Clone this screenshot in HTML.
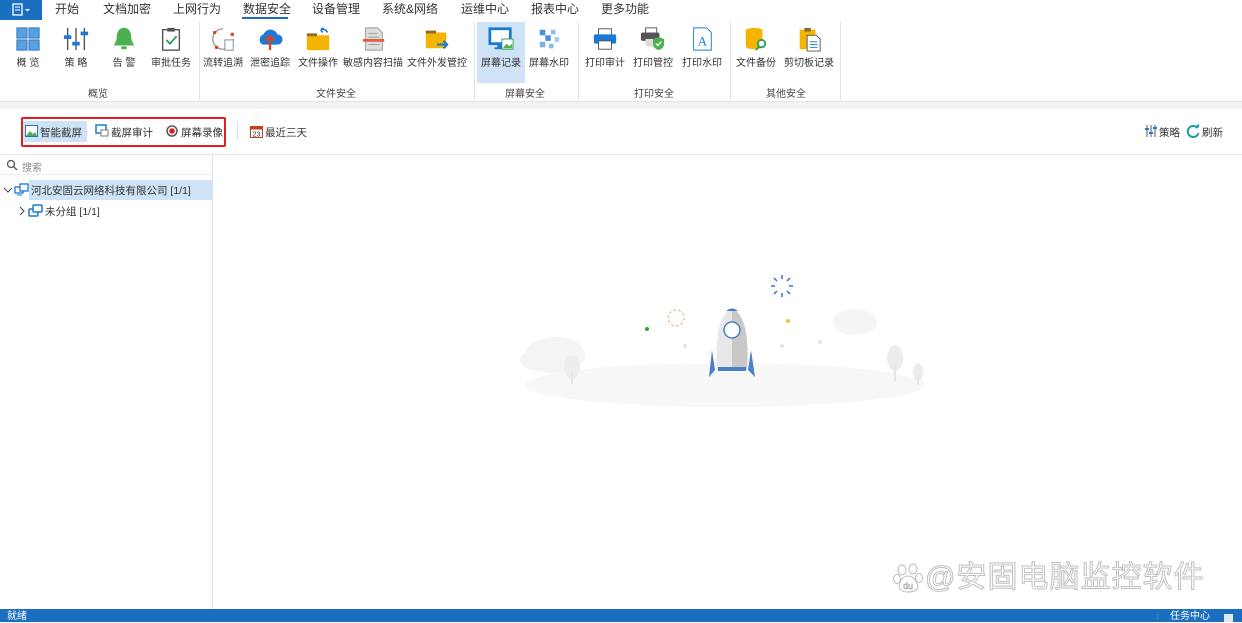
<!DOCTYPE html>
<html><head><meta charset="utf-8"><style>
*{margin:0;padding:0;box-sizing:border-box}
body{width:1242px;height:622px;overflow:hidden;background:#fff;font-family:"Liberation Sans","Noto Sans CJK SC",sans-serif;color:#333;position:relative}
.a{position:absolute}
.tab{position:absolute;top:1px;font-size:12px;color:#333;line-height:17px}
.it{position:absolute;top:22px;width:50px;text-align:center;font-size:10px;color:#333;line-height:13px}
.it svg{display:block;margin:4px auto 5px;width:26px;height:26px}
.gl{position:absolute;top:88px;font-size:10px;color:#444;text-align:center;line-height:14px}
.vd{position:absolute;top:22px;width:1px;height:78px;background:#e2e2e2}
</style></head><body>
<div class="a" style="left:0;top:0;width:42px;height:20px;background:#1a6fc0"></div>
<svg class="a" style="left:12px;top:3px" width="20" height="14"><rect x="1" y="1" width="9" height="11" fill="none" stroke="#fff" stroke-width="1.3"/><line x1="3" y1="4" x2="8" y2="4" stroke="#fff"/><line x1="3" y1="7" x2="8" y2="7" stroke="#fff"/><path d="M13 6 l2.5 2.5 l2.5 -2.5" fill="#fff"/></svg>
<div class="tab" style="left:55px">开始</div>
<div class="tab" style="left:103px">文档加密</div>
<div class="tab" style="left:173px">上网行为</div>
<div class="tab" style="left:243px">数据安全</div>
<div class="a" style="left:242px;top:17px;width:46px;height:2px;background:#1a6fc0"></div>
<div class="tab" style="left:312px">设备管理</div>
<div class="tab" style="left:382px">系统&amp;网络</div>
<div class="tab" style="left:461px">运维中心</div>
<div class="tab" style="left:531px">报表中心</div>
<div class="tab" style="left:601px">更多功能</div>
<div class="a" style="left:477px;top:22px;width:48px;height:61px;background:#cfe3f6"></div>
<div class="it" style="left:3px"><svg viewBox="0 0 28 28"><rect x="2" y="2" width="11" height="11" fill="#5aa0e0" stroke="#2a72c4"/><rect x="15" y="2" width="11" height="11" fill="#5aa0e0" stroke="#2a72c4"/><rect x="2" y="15" width="11" height="11" fill="#5aa0e0" stroke="#2a72c4"/><rect x="15" y="15" width="11" height="11" fill="#5aa0e0" stroke="#2a72c4"/></svg>概 览</div>
<div class="it" style="left:51px"><svg viewBox="0 0 28 28"><g stroke="#555" stroke-width="1.5"><line x1="5" y1="2" x2="5" y2="26"/><line x1="14" y1="2" x2="14" y2="26"/><line x1="23" y1="2" x2="23" y2="26"/></g><rect x="1" y="10" width="8" height="4" fill="#1a7ad4"/><rect x="10" y="17" width="8" height="4" fill="#1a7ad4"/><rect x="19" y="6" width="8" height="4" fill="#1a7ad4"/></svg>策 略</div>
<div class="it" style="left:99px"><svg viewBox="0 0 28 28"><path d="M14 2 C7 2 6 9 6 15 L3 21 H25 L22 15 C22 9 21 2 14 2Z" fill="#4caf50"/><rect x="11" y="22" width="6" height="3" rx="1" fill="#4caf50"/></svg>告 警</div>
<div class="it" style="left:146px"><svg viewBox="0 0 28 28"><rect x="5" y="4" width="18" height="22" fill="#fff" stroke="#555" stroke-width="1.5"/><rect x="10" y="2" width="8" height="4" fill="#555"/><path d="M9 15 l4 4 l7 -8" stroke="#2aa060" stroke-width="2" fill="none"/></svg>审批任务</div>
<div class="vd" style="left:199px"></div>
<div class="it" style="left:198px"><svg viewBox="0 0 28 28"><path d="M14 3 A11 11 0 1 0 25 14" fill="none" stroke="#888" stroke-width="1.2"/><circle cx="5" cy="7" r="1.8" fill="#e04020"/><circle cx="24" cy="9" r="1.8" fill="#e04020"/><circle cx="7" cy="23" r="1.8" fill="#e04020"/><rect x="16" y="15" width="9" height="11" fill="#fff" stroke="#888"/></svg>流转追溯</div>
<div class="it" style="left:245px"><svg viewBox="0 0 28 28"><path d="M6 20 A6 6 0 0 1 7 9 A8 8 0 0 1 22 9 A5.5 5.5 0 0 1 22 20Z" fill="#1a7ad4"/><path d="M14 26 V12 M9 16 l5 -5 l5 5" stroke="#e04020" stroke-width="2.5" fill="none"/></svg>泄密追踪</div>
<div class="it" style="left:293px"><svg viewBox="0 0 28 28"><path d="M2 8 H11 L13 10 H26 V26 H2Z" fill="#f5b400"/><rect x="2" y="8" width="11" height="3" fill="#8a6d2a"/><path d="M24 7 A5 5 0 0 0 17 4 M17 4 l3 -2 M17 4 l2 3" stroke="#1a7ad4" stroke-width="1.8" fill="none"/></svg>文件操作</div>
<div class="it" style="left:343px;width:60px"><svg viewBox="0 0 28 28"><path d="M6 2 H19 L24 7 V26 H6Z" fill="#ddd" stroke="#999"/><g stroke="#999"><line x1="9" y1="8" x2="19" y2="8"/><line x1="9" y1="12" x2="21" y2="12"/><line x1="9" y1="20" x2="21" y2="20"/></g><rect x="3" y="14" width="23" height="3" fill="#e06040"/></svg>敏感内容扫描</div>
<div class="it" style="left:407px;width:60px"><svg viewBox="0 0 28 28"><path d="M2 5 H11 L13 7 H24 V24 H2Z" fill="#f5b400"/><rect x="2" y="5" width="11" height="3" fill="#8a6d2a"/><path d="M14 20 H25 M21 16 l4 4 l-4 4" stroke="#1a7ad4" stroke-width="2.2" fill="none"/></svg>文件外发管控</div>
<div class="vd" style="left:474px"></div>
<div class="it" style="left:476px"><svg viewBox="0 0 28 28"><rect x="2" y="3" width="22" height="16" fill="#fff" stroke="#1a7ad4" stroke-width="3"/><rect x="10" y="20" width="6" height="4" fill="#1a7ad4"/><rect x="7" y="23" width="12" height="2" fill="#1a7ad4"/><rect x="15" y="14" width="12" height="11" fill="#fff" stroke="#2aa060"/><path d="M16 24 l4 -5 l3 3 l3 -3 v5z" fill="#4caf50"/></svg>屏幕记录</div>
<div class="it" style="left:524px"><svg viewBox="0 0 28 28"><g fill="#4a90d8"><rect x="4" y="4" width="6" height="6"/><rect x="16" y="4" width="5" height="5" opacity=".6"/><rect x="10" y="10" width="6" height="6"/><rect x="20" y="12" width="5" height="5" opacity=".5"/><rect x="4" y="17" width="6" height="6" opacity=".7"/><rect x="14" y="19" width="5" height="5" opacity=".6"/></g></svg>屏幕水印</div>
<div class="vd" style="left:578px"></div>
<div class="it" style="left:580px"><svg viewBox="0 0 28 28"><rect x="7" y="3" width="14" height="7" fill="#fff" stroke="#555"/><rect x="2" y="9" width="24" height="10" rx="2" fill="#1a7ad4"/><rect x="7" y="16" width="14" height="9" fill="#fff" stroke="#555"/></svg>打印审计</div>
<div class="it" style="left:628px"><svg viewBox="0 0 28 28"><rect x="6" y="2" width="12" height="6" fill="#fff" stroke="#555"/><rect x="1" y="7" width="20" height="9" rx="2" fill="#555"/><rect x="6" y="14" width="10" height="8" fill="#ddd"/><path d="M20 12 l6 2 v5 c0 4 -3 6 -6 7 c-3 -1 -6 -3 -6 -7 v-5z" fill="#4caf50"/><path d="M17 19 l2 2 l4 -4" stroke="#fff" stroke-width="1.5" fill="none"/></svg>打印管控</div>
<div class="it" style="left:677px"><svg viewBox="0 0 28 28"><path d="M5 2 H19 L24 7 V26 H5Z" fill="#fff" stroke="#1a7ad4"/><text x="14.5" y="21" font-size="14" text-anchor="middle" fill="#1a7ad4" font-family="Liberation Serif">A</text></svg>打印水印</div>
<div class="vd" style="left:730px"></div>
<div class="it" style="left:731px"><svg viewBox="0 0 28 28"><ellipse cx="12" cy="5" rx="9" ry="3" fill="#f5b400"/><path d="M3 5 V22 C3 26 21 26 21 22 V5" fill="#f5b400"/><circle cx="20" cy="19" r="4" fill="#fff" stroke="#2aa060" stroke-width="2"/><line x1="17" y1="22" x2="14" y2="26" stroke="#2aa060" stroke-width="2"/></svg>文件备份</div>
<div class="it" style="left:781px;width:56px"><svg viewBox="0 0 28 28"><rect x="4" y="4" width="17" height="21" fill="#f5b400"/><rect x="9" y="2" width="7" height="4" fill="#8a6d2a"/><path d="M12 10 H22 L26 14 V27 H12Z" fill="#fff" stroke="#555"/><g stroke="#1a7ad4"><line x1="15" y1="17" x2="23" y2="17"/><line x1="15" y1="20" x2="23" y2="20"/><line x1="15" y1="23" x2="23" y2="23"/></g></svg>剪切板记录</div>
<div class="vd" style="left:840px"></div>
<div class="gl" style="left:88px">概览</div>
<div class="gl" style="left:316px">文件安全</div>
<div class="gl" style="left:505px">屏幕安全</div>
<div class="gl" style="left:634px">打印安全</div>
<div class="gl" style="left:766px">其他安全</div>
<div class="a" style="left:0;top:101px;width:1242px;height:8px;background:#f3f3f3;border-top:1px solid #e4e4e4"></div>
<div class="a" style="left:22px;top:121px;width:65px;height:21px;background:#cfe3f6"></div>
<div class="a" style="left:21px;top:117px;width:205px;height:30px;border:2px solid #e02020;border-radius:2px"></div>
<svg class="a" style="left:25px;top:125px" width="13" height="12"><rect x=".5" y=".5" width="12" height="11" fill="#fff" stroke="#2a72c4"/><path d="M1 11 l4 -5 l3 3 l2 -2 l2 4z" fill="#4caf50"/></svg>
<div class="a" style="left:40px;top:125px;font-size:10.5px">智能截屏</div>
<svg class="a" style="left:95px;top:124px" width="14" height="13"><rect x="1" y="1" width="10" height="8" fill="none" stroke="#1a7ad4" stroke-width="1.5"/><rect x="6" y="6" width="7" height="6" fill="#fff" stroke="#777"/></svg>
<div class="a" style="left:111px;top:125px;font-size:10.5px">截屏审计</div>
<svg class="a" style="left:166px;top:125px" width="12" height="12"><circle cx="6" cy="6" r="5" fill="#fff" stroke="#555" stroke-width="1.5"/><circle cx="6" cy="6" r="2.8" fill="#e02020"/></svg>
<div class="a" style="left:181px;top:125px;font-size:10.5px">屏幕录像</div>
<div class="a" style="left:237px;top:122px;width:1px;height:18px;background:#e0e0e0"></div>
<svg class="a" style="left:250px;top:125px" width="13" height="13"><rect x=".5" y="1.5" width="12" height="11" fill="#fff" stroke="#c04020"/><rect x=".5" y="1.5" width="12" height="3" fill="#c04020"/><text x="6.5" y="11.5" font-size="7" text-anchor="middle" fill="#333">23</text></svg>
<div class="a" style="left:265px;top:125px;font-size:10.5px">最近三天</div>
<svg class="a" style="left:1144px;top:124px" width="14" height="14"><g stroke="#555"><line x1="3" y1="1" x2="3" y2="13"/><line x1="7" y1="1" x2="7" y2="13"/><line x1="11" y1="1" x2="11" y2="13"/></g><rect x="1" y="4" width="4" height="2" fill="#1a7ad4"/><rect x="5" y="8" width="4" height="2" fill="#1a7ad4"/><rect x="9" y="3" width="4" height="2" fill="#1a7ad4"/></svg>
<div class="a" style="left:1159px;top:125px;font-size:10.5px">策略</div>
<svg class="a" style="left:1186px;top:124px" width="14" height="14"><path d="M11.5 4 A5.5 5.5 0 1 0 12.5 9" stroke="#18a0a0" stroke-width="2" fill="none"/><path d="M8.5 3.5 h4.5 v-4z" fill="#18a0a0"/></svg>
<div class="a" style="left:1202px;top:125px;font-size:10.5px">刷新</div>
<div class="a" style="left:0;top:154px;width:1242px;height:1px;background:#e8e8e8"></div>
<div class="a" style="left:212px;top:155px;width:1px;height:454px;background:#e0e0e0"></div>
<svg class="a" style="left:6px;top:159px" width="12" height="12"><circle cx="5" cy="5" r="3.5" fill="none" stroke="#555" stroke-width="1.3"/><line x1="7.5" y1="7.5" x2="11" y2="11" stroke="#555" stroke-width="1.3"/></svg>
<div class="a" style="left:22px;top:159px;font-size:10px;color:#888">搜索</div>
<div class="a" style="left:0;top:174px;width:212px;height:1px;background:#eee"></div>
<div class="a" style="left:29px;top:180px;width:183px;height:20px;background:#cfe3f6"></div>
<svg class="a" style="left:3px;top:185px" width="10" height="10"><path d="M1 3 l4 4 l4 -4" stroke="#444" fill="none"/></svg>
<svg class="a" style="left:14px;top:183px" width="15" height="14"><rect x="1" y="4" width="8" height="6" fill="#fff" stroke="#1a7ad4" stroke-width="1.3"/><rect x="6" y="1" width="8" height="7" fill="#fff" stroke="#1a7ad4" stroke-width="1.3"/><line x1="3" y1="12" x2="8" y2="12" stroke="#1a7ad4"/></svg>
<div class="a" style="left:31px;top:183px;font-size:10.5px">河北安固云网络科技有限公司 [1/1]</div>
<svg class="a" style="left:17px;top:206px" width="10" height="10"><path d="M3 1 l4 4 l-4 4" stroke="#444" fill="none"/></svg>
<svg class="a" style="left:28px;top:204px" width="15" height="14"><rect x="1" y="5" width="9" height="7" rx="1" fill="#fff" stroke="#1a7ad4" stroke-width="1.5"/><rect x="5" y="1" width="9" height="7" rx="1" fill="#fff" stroke="#1a7ad4" stroke-width="1.5"/></svg>
<div class="a" style="left:45px;top:204px;font-size:10.5px">未分组 [1/1]</div>
<svg class="a" style="left:510px;top:260px" width="430" height="150">
<ellipse cx="215" cy="125" rx="200" ry="22" fill="#f7f7f7"/>
<ellipse cx="45" cy="95" rx="30" ry="18" fill="#f4f4f4"/><ellipse cx="35" cy="100" rx="25" ry="12" fill="#f4f4f4"/>
<ellipse cx="62" cy="107" rx="8" ry="12" fill="#ededed"/><rect x="61" y="110" width="2" height="14" fill="#e6e6e6"/>
<ellipse cx="345" cy="62" rx="22" ry="13" fill="#f5f5f5"/>
<ellipse cx="385" cy="98" rx="8" ry="13" fill="#ededed"/><rect x="384" y="105" width="2" height="16" fill="#e6e6e6"/>
<ellipse cx="408" cy="112" rx="5" ry="9" fill="#ededed"/><rect x="407" y="115" width="2" height="10" fill="#e6e6e6"/>
<circle cx="166" cy="58" r="8" fill="none" stroke="#f0a070" stroke-dasharray="2.5 2.5"/>
<circle cx="137" cy="69" r="2" fill="#3aa040"/><circle cx="278" cy="61" r="2" fill="#f5c040"/>
<circle cx="175" cy="86" r="2" fill="#e4e4e4"/><circle cx="272" cy="86" r="2" fill="#e4e4e4"/><circle cx="310" cy="82" r="2" fill="#e4e4e4"/>
<g stroke="#3a70c0" stroke-width="1.5"><line x1="272" y1="15" x2="272" y2="19"/><line x1="272" y1="33" x2="272" y2="37"/><line x1="261" y1="26" x2="265" y2="26"/><line x1="279" y1="26" x2="283" y2="26"/><line x1="264" y1="18" x2="267" y2="21"/><line x1="277" y1="31" x2="280" y2="34"/><line x1="280" y1="18" x2="277" y2="21"/><line x1="264" y1="34" x2="267" y2="31"/></g>
<path d="M205 110 L199 117 L202 90 Z" fill="#4a80c4"/><path d="M238 110 L245 117 L241 90 Z" fill="#4a80c4"/>
<path d="M222 48 C208 55 205 80 207 110 H237 C239 80 236 55 222 48Z" fill="#e8e8e8"/>
<path d="M222 48 C236 55 239 80 237 110 H222Z" fill="#c8c8c8"/>
<path d="M216 51 Q222 46 228 51 Z" fill="#4a80c4"/>
<circle cx="222" cy="70" r="8" fill="#fff" stroke="#4a80c4" stroke-width="1.5"/>
<rect x="208" y="107" width="28" height="4" fill="#4a80c4"/>
</svg>
<svg class="a" style="left:893px;top:563px" width="32" height="32"><g fill="#fff" stroke="#bbb"><ellipse cx="9" cy="7" rx="4" ry="5"/><ellipse cx="20" cy="6" rx="4" ry="5"/><ellipse cx="4" cy="16" rx="3.5" ry="4.5"/><ellipse cx="26" cy="15" rx="3.5" ry="4.5"/><path d="M15 13 C8 13 5 22 7 26 C10 30 20 30 24 26 C26 22 22 13 15 13Z"/></g><text x="15" y="26" font-size="9" text-anchor="middle" fill="#fff" stroke="#999" stroke-width=".5">du</text></svg>
<div class="a" style="left:925px;top:558px;font-size:30px;color:#fff;-webkit-text-stroke:1px #c0c0c0;letter-spacing:1px;line-height:40px">@安固电脑监控软件</div>
<div class="a" style="left:0;top:609px;width:1242px;height:13px;background:#1a6fc0"></div>
<div class="a" style="left:7px;top:611px;font-size:10px;color:#fff;line-height:12px">就绪</div>
<div class="a" style="left:1155px;top:611px;font-size:10px;color:#4caf50;line-height:12px">↓</div>
<div class="a" style="left:1170px;top:611px;font-size:10px;color:#fff;line-height:12px">任务中心</div>
<div class="a" style="left:1224px;top:614px;width:9px;height:8px;background:#e0e8f0"></div>
</body></html>
